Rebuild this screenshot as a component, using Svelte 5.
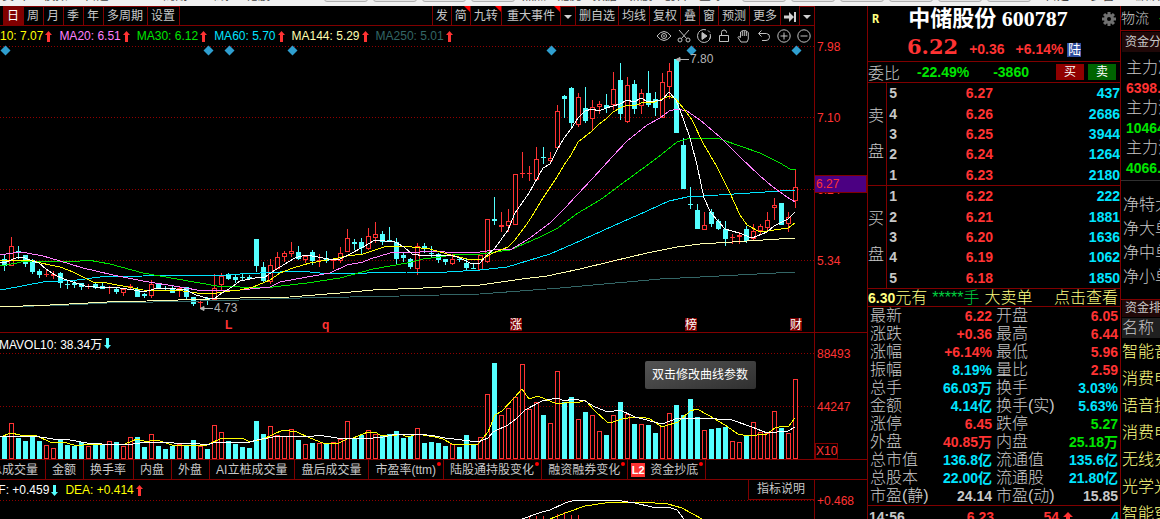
<script lang="ts">
  const menuLeft = ["卖出", "模拟", "自选", "F10", "周期", "画线", "论股"];
  const menuMid = ["热点", "龙虎", "数据", "新股", "创科", "全球"];
  const menuRight = ["自定", "多窗", "默认"];

  const periods = ["日", "周", "月", "季", "年", "多周期", "设置"];
  let period = "日";

  const tools = [
    { name: "发" },
    { name: "简", hot: true },
    { name: "九转", hot: true },
    { name: "重大事件", hot: true, wide: true },
    { name: "▼", arrow: true },
    { name: "删自选" },
    { name: "均线" },
    { name: "复权" },
    { name: "叠" },
    { name: "窗" },
    { name: "预测" },
    { name: "更多" },
  ];

  const averages = [
    { label: "MA10: 7.07", color: "#ffff00" },
    { label: "MA20: 6.51", color: "#ff80ff" },
    { label: "MA30: 6.12", color: "#00e600" },
    { label: "MA60: 5.70", color: "#00e5ff" },
    { label: "MA144: 5.29", color: "#ffffb0" },
    { label: "MA250: 5.01", color: "#336666" },
  ];

  // u = up (hollow red), d = down (solid cyan): high, body top, body bottom, low, volume top
  const raw = `d254,259,266,271,437 u237,246,266,266,423 d246,251,252,259,438 d255,255,264,267,441 d259,260,272,274,436
    d269,271,275,278,441 u270,274,275,277,445 u271,274,276,279,448 d272,273,283,288,440 d281,284,285,289,445
    d280,283,285,288,446 d283,283,287,290,442 u284,286,287,289,446 d283,284,288,289,445 d282,286,289,289,445
    u286,287,288,294,441 d287,289,292,294,442 u289,289,293,296,446 u284,286,288,290,437 d287,289,297,297,437
    d293,294,296,298,447 u280,284,296,298,434 d283,284,289,289,446 d286,288,289,291,449 d286,289,293,293,446
    u286,288,290,297,444 d287,287,297,299,445 d297,297,304,306,440 u300,302,303,308,446 d297,298,300,305,449
    u274,288,300,300,425 u273,276,285,290,432 d273,274,279,280,441 d275,277,280,283,444 d274,277,278,280,447
    d275,277,279,279,448 d239,239,266,272,421 d262,267,281,282,434 u259,265,282,284,426 u252,257,269,269,435
    u251,253,257,262,436 u242,251,254,257,429 d246,252,259,260,440 u255,256,260,263,444 d250,252,261,265,443
    u254,260,261,267,443 d251,258,261,263,444 u260,260,261,269,442 u247,253,261,263,439 u229,238,252,252,421
    d239,242,244,250,438 d238,242,248,254,435 u228,236,249,250,430 u222,234,238,243,434 d231,234,242,245,436
    d227,240,242,242,434 d238,242,259,264,431 d253,255,258,262,438 d258,259,267,269,436 u243,246,269,275,428
    d243,246,248,253,443 d246,253,254,257,442 d253,254,260,263,443 d259,259,262,265,446 u254,259,264,265,444
    d257,259,260,262,447 d259,263,268,270,435 d263,268,269,269,445 u255,255,270,270,437 u219,219,262,263,394
    d197,219,221,225,363 u212,225,227,232,415 u209,221,226,232,408 u174,174,225,225,397 u152,173,174,178,364
    u166,173,174,181,409 u147,159,180,180,402 d147,157,158,164,415 u152,158,161,163,423 u105,111,148,148,371
    d95,96,99,118,402 d87,88,123,129,397 u93,97,125,127,419 d87,108,121,123,412 u100,107,119,131,415
    u101,104,107,114,431 d94,105,108,113,435 u72,89,105,110,415 d63,80,114,120,402 u77,85,122,123,414
    d80,84,109,114,424 u89,93,106,114,424 d71,93,105,107,425 d92,99,108,116,433 u73,82,118,118,426
    u63,71,87,99,413 d59,59,133,133,405 d138,145,189,189,415 d187,204,205,209,399 d204,210,229,229,417
    u212,225,230,230,430 d209,212,224,227,429 d219,221,229,230,428 d221,229,239,246,427 u234,237,238,244,441
    u232,235,237,244,442 d226,229,241,243,435 u224,231,239,241,422 u224,226,231,235,432 u212,220,228,230,433
    u198,205,208,220,411 d203,203,225,225,428 u212,217,224,232,433 u170,187,201,208,379`;

  const candles = raw
    .trim()
    .split(/\s+/)
    .map((item, i) => {
      const [high, top, bottom, low, vol] = item.slice(1).split(",").map(Number);
      return { x: 4 + i * 7, up: item[0] === "u", high, top, bottom, low, vol };
    });

  const maLines = [
    { color: "#336666", points: "0,307 70,305 107,303 200,301 240,300 300,298 350,297 400,296 480,294 560,288 660,279 700,277 795,272" },
    { color: "#ffffb0", points: "0,307 23,306 50,305 107,302 147,301 240,298 290,297 340,293 373,290 423,288 480,285 522,279 547,276 580,269 613,261 647,253 677,247 700,244 795,238" },
    { color: "#00e5ff", points: "0,290 17,287 27,285 43,282 77,280 100,277 143,276 227,275 240,274 280,272 300,271 320,273 367,273 407,272 447,272 480,270 507,267 550,254 573,244 613,226 647,211 669,201 687,197 703,196 750,193 795,190" },
    { color: "#00e600", points: "0,266 17,263 25,261 50,261 80,261 88,260 110,264 143,273 177,279 217,286 240,287 273,287 307,283 340,278 373,269 407,263 423,259 440,257 453,255 480,254 510,250 540,237 558,228 578,213 600,200 627,180 657,158 677,142 687,139 692,138 720,139 740,146 760,153 780,163 790,169 796,170" },
    { color: "#ff80ff", points: "0,255 13,253 18,252 27,253 43,256 60,261 83,268 113,275 143,281 180,287 203,291 240,290 270,287 280,282 313,276 330,273 347,265 363,262 370,259 390,253 420,252 437,251 453,253 480,252 500,249 512,249 530,238 550,223 565,208 577,195 593,178 613,156 627,141 647,125 660,118 669,111 677,109 687,111 700,120 720,137 740,157 760,176 773,187 787,197 795,202" },
    { color: "#ffff00", points: "0,260 30,260 41,263 50,265 60,267 73,272 93,282 107,283 133,288 143,290 183,291 197,293 210,294 230,291 240,290 253,287 270,280 280,273 293,268 310,263 333,259 347,256 363,254 387,246 403,246 430,249 447,254 467,259 480,260 493,253 508,247 515,240 529,221 543,198 557,177 564,165 571,155 578,142 592,131 599,124 606,119 613,112 620,108 627,105 634,106 641,103 655,102 669,96 676,99 687,113 692,120 703,143 717,167 730,193 740,215 747,225 760,232 788,228 795,223" },
    { color: "#ffffff", points: "0,262 4,263 18,257 25,258 32,261 39,263 46,269 55,275 64,279 73,282 85,286 95,287 120,288 134,290 144,292 154,289 165,288 186,290 196,295 207,298 214,299 222,293 232,287 240,281 255,278 265,277 275,270 285,264 295,258 305,255 318,257 328,259 338,260 350,254 363,247 375,240 385,241 395,242 404,247 412,254 425,256 440,255 450,255 460,258 470,263 480,263 485,257 495,248 508,230 515,213 529,193 543,168 550,164 557,150 564,138 571,129 578,118 585,111 592,109 599,111 606,108 620,104 627,100 634,102 641,98 648,102 662,100 669,92 676,100 683,118 690,138 697,165 704,198 711,213 718,221 725,229 739,233 752,238 767,232 774,226 788,219 795,212" },
  ];

  const volLines = [
    { color: "#ffff00", points: "0,437 11,433 20,435 37,436 50,442 67,443 77,446 90,444 107,445 125,444 137,439 147,442 153,440 160,441 172,445 190,445 207,445 222,438 242,438 250,442 263,439 283,430 297,432 310,438 323,443 337,444 347,439 353,438 368,432 375,432 380,435 393,436 400,434 408,437 417,434 435,437 443,439 452,444 478,444 488,432 495,415 502,411 515,397 522,389 529,399 538,396 557,404 572,402 578,403 585,400 595,411 607,422 613,422 622,419 635,417 642,417 650,419 662,427 678,422 690,411 697,409 708,415 725,425 738,434 748,436 767,434 775,428 783,426 788,427 795,418" },
    { color: "#ffffff", points: "0,436 13,436 40,437 53,439 70,440 87,443 117,445 133,444 147,442 200,444 208,445 215,442 250,442 257,440 273,437 290,436 310,437 318,435 337,438 363,439 383,437 397,434 427,435 435,436 445,438 462,440 478,442 488,438 493,432 508,425 517,418 525,410 542,401 557,398 565,401 572,399 585,401 595,407 608,412 620,410 635,417 662,424 678,418 702,418 732,420 752,427 767,433 788,431 795,427" },
  ];

  const diamonds = [5, 208, 229, 292, 551, 691, 796];
  const marks = [
    { x: 516, text: "涨" },
    { x: 691, text: "榜" },
    { x: 796, text: "财" },
  ];
  const macdBars = [[529, 517], [536, 516], [543, 516], [557, 514], [564, 512], [571, 515], [578, 515]];

  const tabs = [
    { name: "总成交量" },
    { name: "金额" },
    { name: "换手率" },
    { name: "内盘" },
    { name: "外盘" },
    { name: "AI立桩成交量" },
    { name: "盘后成交量" },
    { name: "市盈率(ttm)", dot: true },
    { name: "陆股通持股变化", dot: true },
    { name: "融资融券变化", dot: true },
    { name: "资金抄底", dot: true, l2: true },
  ];

  const book = [
    { side: "卖盘", rows: [[5, "6.27", 437], [4, "6.26", 2686], [3, "6.25", 3944], [2, "6.24", 1264], [1, "6.23", 2180]] },
    { side: "买盘", rows: [[1, "6.22", 222], [2, "6.21", 1881], [3, "6.20", 1636], [4, "6.19", 1062], [5, "6.18", 1850]] },
  ];

  const stats = [
    ["最新", "6.22", "red", "开盘", "6.05", "red"],
    ["涨跌", "+0.36", "red", "最高", "6.44", "red"],
    ["涨幅", "+6.14%", "red", "最低", "5.96", "red"],
    ["振幅", "8.19%", "cyan", "量比", "2.59", "red"],
    ["总手", "66.03万", "cyan", "换手", "3.03%", "cyan"],
    ["金额", "4.14亿", "cyan", "换手(实)", "5.63%", "cyan"],
    ["涨停", "6.45", "red", "跌停", "5.27", "green"],
    ["外盘", "40.85万", "red", "内盘", "25.18万", "green"],
    ["总市值", "136.8亿", "cyan", "流通值", "135.6亿", "cyan"],
    ["总股本", "22.00亿", "cyan", "流通股", "21.80亿", "cyan"],
    ["市盈(静)", "24.14", "gray", "市盈(动)", "15.85", "gray"],
  ];

  const flows = [
    { name: "主力净流入", value: "6398.2", cls: "red" },
    { name: "主力流入", value: "10464.5", cls: "green" },
    { name: "主力流出", value: "4066.3", cls: "green" },
  ];
  const nets = ["净特大单", "净大单", "净中单", "净小单"];
  const sectors = ["智能音箱", "消费电子", "语音技术", "消费电子", "无线充电", "光学光电", "智能穿戴"];
</script>

<div class="app">
  <div class="menubar">
    <div class="menu left">{#each menuLeft as item}<span>{item}</span>{/each}</div>
    <div class="boxes">{#each [1, 2, 3, 4] as n}<i></i>{/each}</div>
    <div class="menu mid">{#each menuMid as item}<span>{item}</span>{/each}</div>
    <div class="boxes">{#each [1, 2, 3, 4, 5, 6] as n}<i></i>{/each}</div>
    <div class="menu">{#each menuRight as item}<span>{item}</span>{/each}</div>
  </div>

  <div class="main">
    <div class="charts">
      <div class="toolbar">
        <div class="periods">
          {#each periods as item}
            <button class:active={period === item} on:click={() => (period = item)}>{item}</button>
          {/each}
        </div>
        <div class="tools">
          {#each tools as tool}
            {#if tool.arrow}
              <button class="drop" aria-label="事件菜单"><svg width="8" height="4"><path d="M0 0h8l-4 4z" fill="#d0d0d0" /></svg></button>
            {:else}
              <button class:hot={tool.hot} class:wide={tool.wide}>{tool.name}</button>
            {/if}
          {/each}
          <button class="next" aria-label="下一个"><svg width="12" height="12"><path d="M0 4.500h5V1l5 5-5 5V7.500H0zM10 1h2v10h-2z" fill="#d0d0d0" /></svg></button>
          <button class="drop" aria-label="更多菜单"><svg width="8" height="4"><path d="M0 0h8l-4 4z" fill="#d0d0d0" /></svg></button>
        </div>
      </div>

      <div class="row price">
        <div class="plot">
          <svg class="chart" viewBox="0 26 814 306" preserveAspectRatio="xMaxYMin slice">
            <g class="grid">
              {#each [46, 117, 189, 260] as y}<line x1="0" x2="814" y1={y + 0.5} y2={y + 0.5} />{/each}
            </g>
            {#each diamonds as x}<path d="M{x + 0.5} 45.500l5 5-5 5-5-5z" fill="#2f9fd0" />{/each}
            <g shape-rendering="crispEdges">
              {#each candles as c}
                {#if c.up}
                  <path d="M{c.x + 0.5} {c.high}V{c.top}M{c.x + 0.5} {c.bottom}V{c.low}" stroke="#ff3333" />
                  {#if c.bottom - c.top > 2}
                    <rect x={c.x - 1.5} y={c.top + 0.5} width="4" height={c.bottom - c.top - 1} fill="#000" stroke="#ff3333" />
                  {:else}
                    <rect x={c.x - 2} y={c.top} width="5" height={c.bottom - c.top} fill="#ff3333" />
                  {/if}
                {:else}
                  <rect x={c.x} y={c.high} width="1" height={c.low - c.high} fill="#54ffff" />
                  <rect x={c.x - 2} y={c.top} width="5" height={c.bottom - c.top} fill="#54ffff" />
                {/if}
              {/each}
              {#each maLines as line}<polyline points={line.points} stroke={line.color} fill="none" />{/each}
            </g>
            <path d="M676 59.500h13M676 59.500l4-2v4zM200 308.500h13M200 308.500l4-2v4z" stroke="#b4b4b4" fill="#b4b4b4" />
            <text class="peak" x="690" y="63">7.80</text>
            <text class="peak" x="214" y="312">4.73</text>
            <text class="sign" x="225" y="329">L</text>
            <text class="sign" x="322" y="329">q</text>
            {#each marks as mark}
              <rect x={mark.x - 6} y="318" width="12" height="13" fill="#800000" />
              <text class="mark" x={mark.x} y="329">{mark.text}</text>
            {/each}
          </svg>
          <div class="legend">
            {#each averages as ma}
              <span style="color: {ma.color}">{ma.label}</span>
              <svg class="trend" width="7" height="11"><path d="M3.500 0l3.500 4H5v7H2V4H0z" fill="#ff3333" /></svg>
            {/each}
          </div>
          <div class="icons">
            <button aria-label="显示"><svg viewBox="0 0 14 14"><path d="M0 7q7-9 14 0-7 9-14 0z" /><circle cx="7" cy="7" r="2.500" /><circle cx="7" cy="7" r="0.500" /></svg></button>
            <button aria-label="剪切"><svg viewBox="0 0 14 14"><path d="M2 1l7.500 8.500M12 1L4.500 9.500" /><circle cx="3" cy="11" r="2" /><circle cx="11" cy="11" r="2" /></svg></button>
            <button aria-label="播放"><svg viewBox="0 0 14 14"><path d="M9 .8A6.500 6.500 0 1 0 13.200 5M13.500 7a6.500 6.500 0 0 1-1 3.500M11 1.500l2 2" /><path d="M5 3.500L10 7l-5 3.500z" fill="#c0c0c0" /></svg></button>
            <button aria-label="锁定"><svg viewBox="0 0 14 14"><path d="M2.500 6.500h9v6h-9zM4.500 6V3.500a2.500 2.500 0 0 1 5 0V4" /></svg></button>
            <button aria-label="拖动"><svg viewBox="0 0 14 14"><path d="M4 13L1 8.500q0-1.500 2-.5l.5.500V3q.8-1.500 1.800 0V2q1-2 2 0v0q1-2 2 0v1.500q1-1.500 2 0V10L10 13zM5.300 3v4M7.300 2v5M9.300 2.500V7" /></svg></button>
            <button aria-label="撤销"><svg viewBox="0 0 14 14"><path d="M4.500 1.500l-3 3 3 3M2 4.500h7.500q3.500.5 3 4-.5 3-3.500 3H5" /></svg></button>
            <button aria-label="放大"><svg viewBox="0 0 14 14"><circle cx="7" cy="7" r="6.200" /><path d="M3.500 7h7M7 3.500v7" /></svg></button>
            <button aria-label="缩小"><svg viewBox="0 0 14 14"><circle cx="7" cy="7" r="6.200" /><path d="M3.500 7h7" /></svg></button>
          </div>
        </div>
        <div class="axis">
          <span style="top: 20px">7.98</span>
          <span style="top: 91px">7.10</span>
          <span style="top: 163px">6.24</span>
          <span style="top: 234px">5.34</span>
          <b>6.27</b>
        </div>
      </div>

      <div class="row volume">
        <div class="plot">
          <svg class="chart" viewBox="0 333 814 126" preserveAspectRatio="xMaxYMin slice">
            <g class="grid">
              <line x1="0" x2="814" y1="353.5" y2="353.5" />
              <line x1="0" x2="814" y1="406.5" y2="406.5" />
            </g>
            <g shape-rendering="crispEdges">
              {#each candles as c}
                {#if c.up}
                  <rect x={c.x - 1.5} y={c.vol + 0.5} width="4" height={458 - c.vol} fill="#000" stroke="#ff3333" />
                {:else}
                  <rect x={c.x - 2} y={c.vol} width="5" height={459 - c.vol} fill="#54ffff" />
                {/if}
              {/each}
              {#each volLines as line}<polyline points={line.points} stroke={line.color} fill="none" />{/each}
            </g>
          </svg>
          <div class="legend">
            <span>MAVOL10: 38.34万</span>
            <svg class="trend" width="7" height="11"><path d="M3.500 11L0 7h2V0h3v7h2z" fill="#54ffff" /></svg>
          </div>
          <div class="tooltip">双击修改曲线参数</div>
        </div>
        <div class="axis">
          <span style="top: 20px">88493</span>
          <span style="top: 73px">44247</span>
          <em>X10</em>
        </div>
      </div>

      <div class="tabs">
        {#each tabs as tab}
          <button class:dot={tab.dot} class:has-l2={tab.l2}>{#if tab.l2}<strong>L2</strong>{/if}{tab.name}</button>
        {/each}
      </div>

      <div class="row macd">
        <div class="plot">
          <svg class="chart" viewBox="0 480 814 39" preserveAspectRatio="xMaxYMin slice">
            <g class="grid"><line x1="0" x2="814" y1="500.5" y2="500.5" /></g>
            <g shape-rendering="crispEdges" fill="none">
              {#each macdBars as [x, y]}<path d="M{x + 0.5} {y}V519" stroke="#ff3333" />{/each}
              <polyline stroke="#ffff00" points="550,519 568,512 585,506 612,502 642,502 668,504 682,508 702,519" />
              <polyline stroke="#ffffff" points="522,519 542,512 550,510 565,503 575,500 615,500 635,503 652,507 668,507 677,510 684,519" />
            </g>
          </svg>
          <div class="legend">
            <span>DIFF: +0.459</span>
            <svg class="trend" width="7" height="11"><path d="M3.500 11L0 7h2V0h3v7h2z" fill="#54ffff" /></svg>
            <span class="dea">DEA: +0.414</span>
            <svg class="trend" width="7" height="11"><path d="M3.500 0l3.500 4H5v7H2V4H0z" fill="#ff3333" /></svg>
          </div>
          <button class="explain">指标说明</button>
        </div>
        <div class="axis"><span style="top: 20px">+0.468</span></div>
      </div>
    </div>

    <div class="quote">
      <div class="head">
        <span class="flag">R</span>
        <h1>中储股份 600787</h1>
        <button class="gear" aria-label="设置">
          <svg width="14" height="14" viewBox="-7 -7 14 14" fill="none" stroke="#707070">
            <circle r="3.500" stroke-width="3" />
            {#each [0, 45, 90, 135] as angle}<path d="M0-7V-4M0 4V7" stroke-width="3" transform="rotate({angle})" />{/each}
          </svg>
        </button>
        <div class="last red">
          <b>6.22</b><span>+0.36</span><span>+6.14%</span><i>陆</i>
        </div>
      </div>
      <div class="ratio">
        <span>委比</span>
        <b>-22.49%</b>
        <b>-3860</b>
        <button class="buy">买</button>
        <button class="sell">卖</button>
      </div>
      {#each book as group}
        <div class="book">
          <div class="side"><span>{group.side[0]}</span><span>{group.side[1]}</span></div>
          <table>
            <tbody>
              {#each group.rows as [level, price, amount]}
                <tr><td>{level}</td><td class="red">{price}</td><td class="cyan">{amount}</td></tr>
              {/each}
            </tbody>
          </table>
        </div>
      {/each}
      <div class="notice">
        <span><b>6.30</b>元有</span><span class="stars">*****手</span><span>大卖单</span>
        <a href="#orders">点击查看</a>
      </div>
      <table class="stats">
        <tbody>
          {#each stats as [name, value, cls, name2, value2, cls2]}
            <tr>
              <th>{name}</th><td class={cls}>{value}</td>
              <th>{name2}</th><td class={cls2}>{value2}</td>
            </tr>
          {/each}
        </tbody>
      </table>
      <div class="tick">
        <span>14:56</span><span class="red">6.23</span><span class="red">54</span>
        <svg width="10" height="10"><path d="M5 0l5 5H7v5H3V5H0z" fill="#ff3333" /></svg>
        <span class="cyan">4</span>
      </div>
    </div>

    <div class="sidebar">
      <div class="industry">物流 <span class="green">-0.52%</span></div>
      <div class="caption">资金分析</div>
      <div class="flows">
        {#each flows as flow}
          <span>{flow.name}</span><b class={flow.cls}>{flow.value}</b>
        {/each}
      </div>
      <div class="nets">
        {#each nets as net}<span>{net}</span>{/each}
      </div>
      <div class="caption rank">资金排名</div>
      <div class="colname">名称</div>
      <div class="sectors">
        {#each sectors as sector}<a href="#sector">{sector}</a>{/each}
      </div>
    </div>
  </div>
</div>

<style>
  :global(body) {
    background: #000;
  }
  .app {
    --line: #800000;
    height: 100vh;
    display: flex;
    flex-direction: column;
    overflow: hidden;
    background: #000;
    color: #c8c8c8;
    font-family: "Liberation Sans", "Noto Sans CJK SC", sans-serif;
    font-size: 12px;
  }
  button {
    margin: 0;
    padding: 0;
    border: none;
    background: none;
    color: inherit;
    font: inherit;
  }
  a {
    color: inherit;
    text-decoration: none;
  }
  table {
    border-collapse: collapse;
  }
  .red { color: #ff3333; }
  .green { color: #00e600; }
  .cyan { color: #00e5ff; }
  .gray { color: #c8c8c8; }

  .menubar {
    flex: none;
    height: 6px;
    display: grid;
    grid-template-columns: 324fr 198fr 220fr 303fr 115fr;
    align-items: end;
    align-content: end;
    overflow: hidden;
    background: #f0f0f0;
    color: #404040;
    white-space: nowrap;
  }
  .menu {
    display: flex;
    justify-content: space-between;
    line-height: 12px;
    padding-bottom: 4px;
  }
  .menu.left {
    padding-left: 2px;
    padding-right: 54px;
  }
  .menu.mid {
    padding-right: 19px;
  }
  .boxes {
    display: flex;
    gap: 5px;
    padding-bottom: 4px;
  }
  .boxes i {
    width: 42px;
    height: 12px;
    border: 1px solid #b0b0b0;
    border-radius: 3px;
    background: #e4e4e4;
  }

  .main {
    flex: 1;
    min-height: 0;
    display: grid;
    grid-template-columns: minmax(0, 1fr) 253px 40px;
    grid-template-rows: minmax(0, 1fr);
  }
  .charts {
    display: flex;
    flex-direction: column;
    min-width: 0;
  }

  .toolbar {
    flex: none;
    height: 19px;
    margin-right: 52px;
    display: flex;
    justify-content: space-between;
    border-right: 1px solid var(--line);
    border-bottom: 1px solid var(--line);
  }
  .periods, .tools {
    display: flex;
  }
  .periods {
    margin-left: 3px;
  }
  .periods button, .tools button {
    box-sizing: border-box;
    position: relative;
    padding: 0 4px 0 3px;
    line-height: 20px;
    white-space: nowrap;
  }
  .periods button {
    border-top: 1px solid var(--line);
    border-right: 1px solid var(--line);
    line-height: 18px;
  }
  .periods button.active {
    padding-left: 4px;
    background: #800000;
    color: #fff;
  }
  .tools button {
    padding: 0 3px;
    border-left: 1px solid var(--line);
  }
  .tools button.wide {
    padding: 0 5px;
  }
  .tools .drop {
    width: 15px;
    border-top: 1px solid var(--line);
    line-height: 18px;
  }
  .tools svg {
    vertical-align: middle;
  }
  .hot::after {
    content: "";
    position: absolute;
    top: 0;
    right: 0;
    border-top: 6px solid #ff0000;
    border-left: 6px solid transparent;
  }

  .row {
    flex: none;
    display: flex;
    border-bottom: 1px solid var(--line);
  }
  .price { height: 306px; }
  .volume { height: 126px; }
  .macd {
    flex: 1;
    min-height: 39px;
    border-bottom: none;
  }
  .plot {
    flex: 1;
    min-width: 0;
    position: relative;
    overflow: hidden;
  }
  .chart {
    display: block;
    width: 100%;
    height: 100%;
  }
  .grid {
    stroke: #900000;
    stroke-dasharray: 1 2;
    shape-rendering: crispEdges;
  }
  .peak {
    fill: #b4b4b4;
    font-size: 12px;
  }
  .sign {
    fill: #ff3333;
    font-size: 12px;
    font-weight: bold;
  }
  .mark {
    fill: #fff;
    font-size: 12px;
    text-anchor: middle;
  }
  .legend {
    position: absolute;
    top: 0;
    left: -18px;
    height: 20px;
    display: flex;
    align-items: center;
    white-space: nowrap;
    color: #fff;
  }
  .trend {
    margin: 0 7px 0 2px;
  }
  .volume .legend {
    left: -1px;
  }
  .macd .legend {
    left: -21px;
  }
  .dea {
    color: #ffff00;
  }
  .icons {
    position: absolute;
    top: 3px;
    right: 3px;
    display: flex;
    gap: 6px;
  }
  .icons svg {
    display: block;
    width: 14px;
    height: 14px;
    fill: none;
    stroke: #c0c0c0;
  }

  .axis {
    flex: none;
    box-sizing: border-box;
    position: relative;
    width: 53px;
    border-left: 1px solid var(--line);
    color: #ff3333;
  }
  .axis span {
    position: absolute;
    left: 2px;
    line-height: 14px;
    margin-top: -6px;
  }
  .axis b {
    box-sizing: border-box;
    position: absolute;
    top: 149px;
    left: 0;
    right: 0;
    padding-left: 1px;
    line-height: 16px;
    border: 1px solid var(--line);
    border-left: none;
    background: #4b0082;
    font-weight: normal;
  }
  .axis em {
    position: absolute;
    left: 0;
    bottom: 0;
    line-height: 14px;
    border: 1px solid var(--line);
    font-style: normal;
  }
  .tooltip {
    position: absolute;
    top: 28px;
    right: 58px;
    padding: 0 8px 0 7px;
    line-height: 28px;
    border-radius: 2px;
    background: linear-gradient(160deg, #545454, #303030);
    color: #fff;
  }

  .tabs {
    flex: none;
    height: 19px;
    display: flex;
    border-bottom: 1px solid var(--line);
    white-space: nowrap;
  }
  .tabs button {
    position: relative;
    padding: 0 7px 0 6px;
    line-height: 20px;
    border-right: 1px solid var(--line);
  }
  .tabs button:first-child {
    margin-left: -16px;
  }
  .tabs .dot::after {
    content: "";
    position: absolute;
    top: 2px;
    right: 2px;
    width: 4px;
    height: 4px;
    border-radius: 50%;
    background: #ff0000;
  }
  .tabs .has-l2 {
    padding-left: 3px;
  }
  .tabs strong {
    display: inline-block;
    margin-right: 5px;
    width: 14px;
    line-height: 14px;
    background: #ff3333;
    color: #fff;
    font-size: 11px;
    text-align: center;
  }
  .explain {
    position: absolute;
    top: 0;
    right: 0;
    padding: 0 9px 0 8px;
    line-height: 19px;
    border-left: 1px solid var(--line);
    border-bottom: 1px solid var(--line);
    background: #000;
  }

  .quote {
    overflow: hidden;
    border-left: 1px solid var(--line);
    font-size: 16px;
    font-weight: 300;
  }
  .head {
    height: 55px;
    position: relative;
    border-bottom: 1px solid var(--line);
  }
  .flag {
    position: absolute;
    top: 6px;
    left: 4px;
    color: #ffff80;
    font: bold 12px "DejaVu Sans Mono", monospace;
  }
  h1 {
    margin: 0;
    padding-right: 12px;
    text-align: center;
    color: #fff;
    font: bold 22px/26px "Liberation Serif", "Noto Sans CJK SC", serif;
  }
  .gear {
    position: absolute;
    top: 6px;
    right: 4px;
    line-height: 0;
  }
  .last {
    display: flex;
    align-items: baseline;
    padding-left: 39px;
    font-size: 14px;
    font-weight: bold;
    line-height: 29px;
  }
  .last b {
    font: bold 21px/29px "DejaVu Serif", serif;
  }
  .last span {
    margin-left: 11px;
  }
  .last i {
    margin-left: 4px;
    width: 14px;
    line-height: 14px;
    background: #2f4f9f;
    color: #fff;
    font-size: 13px;
    font-style: normal;
    font-weight: normal;
    text-align: center;
  }
  .ratio {
    height: 20px;
    display: flex;
    align-items: center;
    border-bottom: 1px solid var(--line);
  }
  .ratio b {
    margin-left: 17px;
    color: #00e600;
    font-size: 14px;
    font-weight: 700;
  }
  .ratio b + b {
    margin-left: 24px;
  }
  .ratio button {
    width: 28px;
    line-height: 16px;
    color: #fff;
    font-size: 12px;
    font-weight: 400;
  }
  .ratio .buy {
    margin-left: auto;
    background: #900000;
  }
  .ratio .sell {
    margin: 0 4px;
    background: #006400;
  }
  .book {
    display: flex;
    min-height: 102px;
    border-bottom: 1px solid var(--line);
  }
  .side {
    width: 18px;
    display: flex;
    flex-direction: column;
    justify-content: center;
    gap: 16px;
    line-height: 20px;
    border-right: 1px solid var(--line);
  }
  .book table {
    flex: 1;
    font-size: 14px;
    font-weight: bold;
  }
  .book td {
    padding: 0;
    height: 20px;
    line-height: 20px;
    text-align: right;
  }
  .book td:first-child {
    width: 9px;
    padding-left: 1px;
  }
  .book td:nth-child(2) {
    width: 96px;
  }
  .notice {
    height: 17px;
    display: flex;
    gap: 5px;
    line-height: 18px;
    border-bottom: 1px solid var(--line);
    color: #ffff80;
    white-space: nowrap;
  }
  .notice b {
    font-size: 14px;
    font-weight: 700;
  }
  .notice a {
    margin: 0 2px 0 auto;
  }
  .stars {
    color: #00d040;
  }
  .stats {
    width: 100%;
    table-layout: fixed;
    border-bottom: 1px solid var(--line);
  }
  .stats th, .stats td {
    padding: 0;
    height: 18px;
    line-height: 18px;
    white-space: nowrap;
  }
  .stats th {
    padding-left: 2px;
    text-align: left;
    font-weight: 300;
  }
  .stats td {
    padding-right: 2px;
    text-align: right;
    font-size: 14px;
    font-weight: bold;
  }
  .tick {
    display: grid;
    grid-template-columns: 60px 65px 65px 20px 1fr;
    align-items: center;
    padding: 0 1px;
    line-height: 22px;
    font-size: 14px;
    font-weight: bold;
    text-align: right;
  }
  .tick span:first-child {
    text-align: left;
  }
  .tick svg {
    margin-left: 4px;
  }

  .sidebar {
    border-left: 1px solid var(--line);
    overflow: hidden;
    white-space: nowrap;
    font-size: 16px;
    font-weight: 300;
  }
  .industry {
    height: 24px;
    line-height: 24px;
    border-bottom: 1px solid var(--line);
    font-size: 14px;
  }
  .industry .green {
    margin-left: 6px;
  }
  .caption {
    margin: 1px 0 0 1px;
    padding-left: 3px;
    line-height: 20px;
    background: #200808;
    font-size: 12px;
    font-weight: 400;
  }
  .flows {
    display: grid;
    padding: 6px 0 2px 5px;
    border-bottom: 1px solid #303030;
    line-height: 20px;
  }
  .flows b {
    font-size: 14px;
    font-weight: 700;
  }
  .nets {
    display: grid;
    padding: 12px 0 10px 2px;
    border-bottom: 1px solid var(--line);
    line-height: 24px;
  }
  .caption.rank {
    margin-top: 0;
    line-height: 17px;
  }
  .colname {
    margin: 1px 0 0 1px;
    line-height: 20px;
    background: #202020;
  }
  .sectors {
    display: grid;
    padding-left: 1px;
    line-height: 27px;
    color: #ffff80;
  }
</style>
